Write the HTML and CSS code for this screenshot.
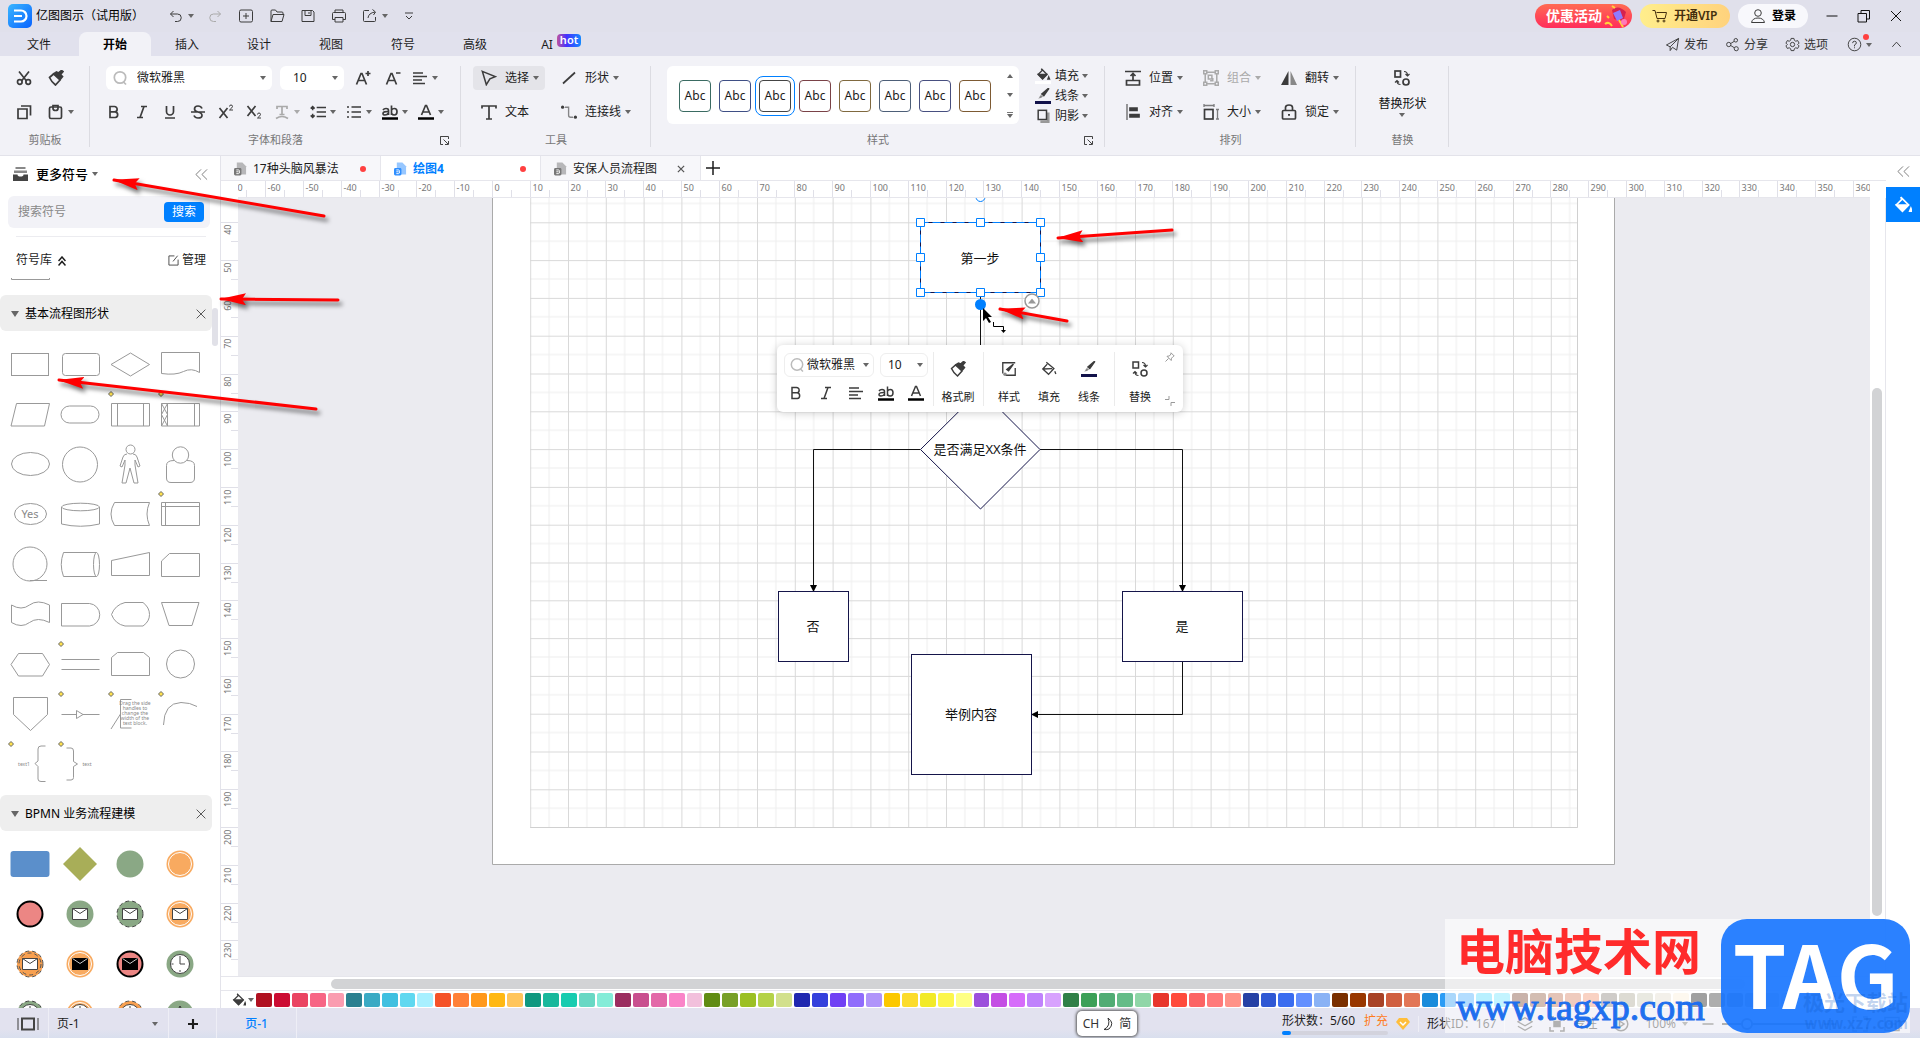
FILE: index.html
```html
<!DOCTYPE html>
<html lang="zh-CN">
<head>
<meta charset="utf-8">
<meta name="viewport" content="width=device-width, initial-scale=1">
<title>亿图图示（试用版）</title>
<link rel="stylesheet" href="styles.css">
</head>
<body>
<svg class="defs" aria-hidden="true">
  <defs>
    <symbol id="caret" viewBox="0 0 6 4"><path d="M0 0h6L3 4z" fill="currentColor" stroke="none"/></symbol>
    <symbol id="caret-up" viewBox="0 0 6 4"><path d="M0 4h6L3 0z" fill="currentColor" stroke="none"/></symbol>
    <symbol id="undo" viewBox="0 0 16 16"><path d="M5.5 3 2.5 6l3 3M2.5 6h7a3.6 3.6 0 0 1 0 7.500H7"/></symbol>
    <symbol id="redo" viewBox="0 0 16 16"><path d="m10.500 3 3 3-3 3M13.500 6h-7a3.600 3.600 0 0 0 0 7.500H9"/></symbol>
    <symbol id="new" viewBox="0 0 16 16"><rect x="1.500" y="2" width="13" height="12" rx="1.500"/><path d="M8 5v6M5 8h6"/></symbol>
    <symbol id="open" viewBox="0 0 16 16"><path d="M2 13.500V3q0-1 1-1h3.500l1.500 2h5q1 0 1 1v1.500M2 13.500 4 6.500h11l-2 7z"/></symbol>
    <symbol id="save" viewBox="0 0 16 16"><path d="M2 2.500h10.500L14 4v9.500H2zM5 2.500v5h6v-5M9 4v2"/></symbol>
    <symbol id="print" viewBox="0 0 16 16"><path d="M4 5V2h8v3M4 11.500H1.500V5.500q0-1 1-1h11q1 0 1 1v6H12M4 9.500h8v4.500H4z"/></symbol>
    <symbol id="export" viewBox="0 0 16 16"><path d="M7 2.500H2.500q-1 0-1 1v9q0 1 1 1h10q1 0 1-1V9M6 10q.5-5 7-6M10.500 1.500l3 2.500-2 3"/></symbol>
    <symbol id="more" viewBox="0 0 16 16"><path d="M4 5h8M5 8l3 3 3-3"/></symbol>
    <symbol id="cart" viewBox="0 0 16 16"><path d="M.5 2.500H3l2 8h8l1.500-6H4.500"/><circle cx="6" cy="13" r="1"/><circle cx="12" cy="13" r="1"/></symbol>
    <symbol id="user" viewBox="0 0 16 16"><circle cx="8" cy="5" r="3.300"/><path d="M1.500 14.500q1-4.500 6.500-4.500t6.500 4.500z"/></symbol>
    <symbol id="min" viewBox="0 0 16 16"><path d="M2.500 8h11"/></symbol>
    <symbol id="restore" viewBox="0 0 16 16"><path d="M2 5.500h8.500V14H2zM5 5.500V2.500h8.500V11h-3"/></symbol>
    <symbol id="close" viewBox="0 0 16 16"><path d="m3 3 10 10M13 3 3 13"/></symbol>
    <symbol id="send" viewBox="0 0 16 16"><path d="M14.500 1.500 1.500 8.500l4 2 9-9L12.500 14 8 11M5.500 10.500v4L8 11"/></symbol>
    <symbol id="share" viewBox="0 0 16 16"><circle cx="4" cy="8" r="2.300"/><circle cx="11.500" cy="3.500" r="1.900"/><circle cx="12" cy="12.500" r="2.200"/><path d="m6 7 4-2.500M6 9l4 2.500"/></symbol>
    <symbol id="gear" viewBox="0 0 16 16"><circle cx="8" cy="8" r="2.300"/><path d="M6.500 1.500h3l.5 2 1.500 1 2-.7 1.500 2.700L13.500 8l1.500 1.500-1.500 2.700-2-.7-1.500 1-.5 2h-3l-.5-2-1.500-1-2 .7L1 9.500 2.500 8 1 6.500l1.500-2.700 2 .7 1.500-1z"/></symbol>
    <symbol id="help" viewBox="0 0 16 16"><circle cx="8" cy="8" r="6.700"/><path d="M6 6.500q0-2 2-2t2 1.800Q10 7.500 8 8.500V10M8 11v1"/></symbol>
    <symbol id="chev-up" viewBox="0 0 16 16"><path d="m3.500 10.500 4.500-5 4.500 5"/></symbol>
    <symbol id="cut" viewBox="0 0 16 16"><path d="M3 1.500 10.500 11M13 1.500 5.500 11"/><circle cx="3.800" cy="12" r="2.300"/><circle cx="12.200" cy="12" r="2.300"/></symbol>
    <symbol id="brush" viewBox="0 0 16 16"><path d="m1.500 7.500 4-3.500L12 10l-4.500 5Q3.500 12 1.500 7.500z"/><path d="M6 3.500 12.500 9l2-2.500-2-2L15 1.500 13.500.500l-3 2.500L8.500 2z" fill="currentColor"/></symbol>
    <symbol id="copy" viewBox="0 0 16 16"><path d="M2 5h9v9.500H2zM5 2h9.500v9.500"/></symbol>
    <symbol id="paste" viewBox="0 0 16 16"><rect x="1.500" y="3" width="12" height="11.500" rx="1.500"/><path d="M5 1.500h5v3q0 2-2.500 2T5 4.500z"/></symbol>
    <symbol id="search" viewBox="0 0 16 16"><circle cx="8" cy="7.500" r="5.700"/><path d="m11.500 12 2.500 2.500"/></symbol>
    <symbol id="grow" viewBox="0 0 16 16"><path d="M1.500 14.500 6 3.500h1l4.500 11M3.500 10.500h6M13 1v5M10.500 3.500h5"/></symbol>
    <symbol id="shrink" viewBox="0 0 16 16"><path d="M1.500 14.500 6 3.500h1l4.500 11M3.500 10.500h6M11 3h4.500"/></symbol>
    <symbol id="align" viewBox="0 0 16 16"><path d="M1 3h10M1 6.500h14M1 10h9M1 13.500h12"/></symbol>
    <symbol id="bold" viewBox="0 0 16 16"><path d="M4 2.500h4.500a2.600 2.600 0 0 1 0 5.300H4zM4 7.800h5.300a2.900 2.900 0 0 1 0 5.700H4z"/></symbol>
    <symbol id="italic" viewBox="0 0 16 16"><path d="M7 2.500h6M3 13.500h6M10 2.500 6 13.500"/></symbol>
    <symbol id="underline" viewBox="0 0 16 16"><path d="M4.500 2v5.500a3.500 3.500 0 0 0 7 0V2M3 14h10"/></symbol>
    <symbol id="strike" viewBox="0 0 16 16"><path d="M12 4.500Q11 2 8 2 4.500 2 4.500 5q0 2 3.500 3 4 1 4 3.500 0 2.500-4 2.500-3 0-4-2.500M1 8h14"/></symbol>
    <symbol id="sup" viewBox="0 0 16 16"><path d="m1.500 4 8 10M9.500 4l-8 10"/><path d="M11.500 2.500q0-1.500 1.500-1.500t1.500 1.500q0 1-3 3.500h3.500" stroke-width="1"/></symbol>
    <symbol id="sub" viewBox="0 0 16 16"><path d="m1.500 2 8 10M9.500 2l-8 10"/><path d="M11.500 10.500q0-1.500 1.500-1.500t1.500 1.500q0 1-3 3.500h3.500" stroke-width="1"/></symbol>
    <symbol id="texteff" viewBox="0 0 16 16"><path d="M3 5V2.500h10V5M8 2.500v8M5.500 10.500h5M2 14.500q6-4 12 0"/></symbol>
    <symbol id="spacing" viewBox="0 0 18 16"><path d="M7.500 3H18M7.500 8H18M7.500 13H18M3 2v4M3 10v4M.8 4.200 3 2l2.200 2.200M.8 11.800 3 14l2.200-2.200"/></symbol>
    <symbol id="list" viewBox="0 0 16 16"><path d="M1 3h2M1 8h2M1 13h2M5.500 3H15M5.500 8H15M5.500 13H15"/></symbol>
    <symbol id="ab" viewBox="0 0 16 16"><path d="M1 6q1-1.500 3-1.500 2.500 0 2.500 2V11M6.500 7.500Q1 7.300 1 9.500 1 11 3 11q2.500 0 3.500-2M9.500 1.500V11M9.500 6q1-1.500 2.800-1.500 2.700 0 2.700 3.200T12.300 11Q10.500 11 9.500 9.500"/><path d="M0 14.500h16" stroke="#000" stroke-width="2.500"/></symbol>
    <symbol id="fcolor" viewBox="0 0 16 16"><path d="M3.500 11 7.500 1.500h1l4 9.500M5 8h6"/><path d="M0 14.500h16" stroke="#000" stroke-width="2.500"/></symbol>
    <symbol id="pointer" viewBox="0 0 18 18"><path d="m1.500 1.500 14.500 6-6 2.500-4 6.500z"/></symbol>
    <symbol id="line" viewBox="0 0 16 16"><path d="M2 13.500 14 2.500"/></symbol>
    <symbol id="text" viewBox="0 0 16 16"><path d="M1 4.500V2h14v2.500M8 2v13M5 15h6"/></symbol>
    <symbol id="connector" viewBox="0 0 20 18"><circle cx="2" cy="3" r="2" fill="currentColor" stroke="none"/><circle cx="18" cy="15.500" r="2" fill="currentColor" stroke="none"/><path d="M5 3h4.500v10q0 2.500 2.500 2.500h3" opacity=".6"/></symbol>
    <symbol id="bucket" viewBox="0 0 16 16"><path d="m6 1 7 7-5.500 5.500L2 8l5-5z"/><path d="M2.500 8H12l-4.500 5zM15 11l1 2.500h-2z" fill="currentColor"/></symbol>
    <symbol id="bucket-line" viewBox="0 0 18 18"><path d="m6 1.500 8.500 7-6 6.500L2 9l5-5.500M2.500 9l10-.500M15.500 11.500l1.200 3"/></symbol>
    <symbol id="pen" viewBox="0 0 16 16"><path d="M14.500.500 15 1 9 9.500 6.500 7.500z" fill="currentColor"/><path d="M5.500 8.500 8 10.500Q6 13 2 13q2-1.500 2-3z" fill="#888" stroke="none"/></symbol>
    <symbol id="shadow" viewBox="0 0 16 16"><path d="M14 4v10.500H5" stroke="#999" stroke-width="3"/><rect x="2.500" y="1.500" width="9.500" height="10.500"/></symbol>
    <symbol id="launcher" viewBox="0 0 9 9"><path d="M3 .5H.5v8H3M8.500 3V.5H.5M3.500 3.500 8 8M8.500 5v3.500H5"/></symbol>
    <symbol id="position" viewBox="0 0 16 16"><path d="M0 1.500h16M8 10V4M5.500 6 8 3.500 10.500 6M1.500 10.500h13v4.500h-13z"/></symbol>
    <symbol id="alignobj" viewBox="0 0 16 16"><path d="M2 0v16" opacity=".6"/><path d="M5 4h7v2.500H5zM5 10.500h9V13H5z" fill="currentColor"/></symbol>
    <symbol id="group" viewBox="0 0 18 18"><path d="M2.500 2.500h13v13h-13z"/><path d="M.8.800h3.400v3.400H.8zM13.800.800h3.400v3.400h-3.400zM.8 13.800h3.400v3.400H.8zM13.800 13.800h3.400v3.400h-3.400z" fill="#f2f2f7"/><path d="M6 6h4v4H6zM11 9v3H8"/></symbol>
    <symbol id="size" viewBox="0 0 16 16"><rect x="1.500" y="5.500" width="8.500" height="9.500"/><path d="M.5 1.500h11M1 0v3M11 0v3M13 5.500h3M13 15h3M14.500 5.500V15" opacity=".65" stroke-width="1.300"/></symbol>
    <symbol id="flip" viewBox="0 0 16 16"><path d="M7.500 1v14H0z" fill="currentColor" stroke="none"/><path d="M9.500 1v14H16z" fill="#888" stroke="none"/></symbol>
    <symbol id="lock" viewBox="0 0 16 16"><rect x="1.500" y="6.500" width="13" height="8.500" rx="1"/><path d="M4.500 6.500V3.500q0-2.500 3.500-2.500t3.500 2.500v3M7 10.800h2"/></symbol>
    <symbol id="replace" viewBox="0 0 16 16"><rect x="1" y="1" width="5.500" height="6"/><circle cx="12" cy="12" r="3"/><path d="M10 1.500q3.500 0 3.500 4M11.500 4l2 2 2-2M6.500 14.500Q3 14.500 3 11M1 12.500l2-2 2 2" stroke-width="1.200"/></symbol>
    <symbol id="drawer" viewBox="0 0 15 15"><path d="M2.500 0h10v2h-10zM1 3.500h13V6H1z" fill="#888" stroke="none"/><path d="M0 7.500h4.500q0 2 3 2t3-2H15V14H0z" fill="currentColor" stroke="none"/></symbol>
    <symbol id="dbl-left" viewBox="0 0 14 14"><path d="M6.500 1.500 1 7l5.500 5.500M13 1.500 7.500 7l5.500 5.500"/></symbol>
    <symbol id="dbl-up" viewBox="0 0 8 10"><path d="m.5 5 3.500-4 3.500 4M.5 9.500 4 5.500l3.500 4"/></symbol>
    <symbol id="edit" viewBox="0 0 12 12"><path d="M7 1H1v10h10V5M5.500 7 10.500.800"/></symbol>
    <symbol id="file" viewBox="0 0 14 14"><path d="M3 0h6l4 4v9H3z" fill="currentColor" opacity=".5" stroke="none"/><rect x="0" y="6" width="8" height="8" rx="1.500" fill="currentColor" stroke="none"/><path d="M2.500 8h2.300q1.200 0 1.200 2t-1.200 2H2.500M2.500 10H5" stroke="#fff" stroke-width="1"/></symbol>
    <symbol id="plus" viewBox="0 0 14 14"><path d="M7 0v14M0 7h14"/></symbol>
    <symbol id="pages" viewBox="0 0 22 14"><rect x="5" y="1.500" width="12" height="11"/><path d="M1 1v12M21 1v12" stroke-width="1.500" opacity=".7"/></symbol>
    <symbol id="layers" viewBox="0 0 18 16"><path d="m1 5.500 8-4.500 8 4.500-8 4.500zM1 10.500l8 4.500 8-4.500"/></symbol>
    <symbol id="focus" viewBox="0 0 16 16"><path d="M1 5V1h4M11 1h4v4M15 11v4h-4M5 15H1v-4"/><path d="M5 5.500h6v5H5z" fill="currentColor"/></symbol>
    <symbol id="play" viewBox="0 0 16 16"><circle cx="8" cy="8" r="6.800"/><path d="m6.500 5 4.500 3-4.500 3z"/></symbol>
    <symbol id="fit" viewBox="0 0 16 16"><path d="M1 5V1h4M11 1h4v4M15 11v4h-4M5 15H1v-4"/></symbol>
    <symbol id="full" viewBox="0 0 16 16"><rect x="1" y="1.500" width="14" height="13"/><path d="M4 8h3M9 8h3M8 4v8"/></symbol>
    <symbol id="pin" viewBox="0 0 10 10"><path d="m6 .8 3.200 3.200-1 .5-1.700 1.700-.3 2.300L2 4.300 4.300 4 6 2zM3.500 6.500.500 9.500"/></symbol>
    <symbol id="style" viewBox="0 0 18 18"><path d="M16 2H2v12M5 16h11V8"/><path d="M14 3.500 8.500 11l-2-1.500z" fill="currentColor"/><circle cx="4.500" cy="15" r="2" fill="#888" stroke="none"/></symbol>
    <symbol id="brace" viewBox="0 0 50 50"><path d="M40.500 7H36q-3 0-3 3v12l-3 2.500 3 3V40q0 2.500 3 2.500h4.500"/></symbol>
    <symbol id="mail" viewBox="0 0 50 50"><path d="M17.500 19.500h15v11h-15z" fill="#fff" stroke="#444"/><path d="m17.500 19.500 7.500 5 7.500-5" stroke="#444"/></symbol>
    <symbol id="mail-dark" viewBox="0 0 50 50"><path d="M17 19h16v12H17z" fill="#000" stroke="none"/><path d="m17.500 19.500 7.500 5 7.500-5" stroke="#ccc"/></symbol>
    <symbol id="clock" viewBox="0 0 50 50"><circle cx="25" cy="25" r="9.500" fill="#fff" stroke="#444"/><path d="M25 17v8h5M25 33v-2M16.500 25h2" stroke="#444"/></symbol>
    <symbol id="handle" viewBox="0 0 50 50"><path d="M6 2.500 8.500 5 6 7.500 3.500 5z" fill="#ffe14d" stroke="#666"/></symbol>
    <marker id="red-head" viewBox="0 0 26 12" refX="25" refY="6" markerWidth="26" markerHeight="12" markerUnits="userSpaceOnUse" orient="auto"><path d="M26 6 0 0l4 6-4 6z" fill="#f00" stroke="none"/></marker>
    <marker id="flow-head" viewBox="0 0 7 7" refX="6" refY="3.500" markerWidth="7" markerHeight="7" markerUnits="userSpaceOnUse" orient="auto"><path d="M7 3.500 0 0v7z" fill="#000" stroke="none"/></marker>
    <linearGradient id="logo-fill" x1="0" y1="0" x2="1" y2="1"><stop offset="0" stop-color="#39b6ff"/><stop offset="1" stop-color="#0a63ff"/></linearGradient>
  </defs>
</svg>

<header class="titlebar">
  <svg class="logo" viewBox="0 0 24 24"><rect width="24" height="24" rx="5" fill="url(#logo-fill)"/><path d="M6 6.500h7a5.500 5.500 0 0 1 0 11H6M6 12h8" stroke="#fff" stroke-width="2.200" fill="none"/></svg>
  <h1 class="app-name">亿图图示（试用版）</h1>
  <nav class="quick">
    <button aria-label="撤销"><svg class="i"><use href="#undo"/></svg><svg class="c"><use href="#caret"/></svg></button>
    <button class="off" aria-label="恢复"><svg class="i"><use href="#redo"/></svg></button>
    <button aria-label="新建"><svg class="i"><use href="#new"/></svg></button>
    <button aria-label="打开"><svg class="i"><use href="#open"/></svg></button>
    <button aria-label="保存"><svg class="i"><use href="#save"/></svg></button>
    <button aria-label="打印"><svg class="i"><use href="#print"/></svg></button>
    <button aria-label="导出"><svg class="i"><use href="#export"/></svg><svg class="c"><use href="#caret"/></svg></button>
    <button aria-label="更多"><svg class="i"><use href="#more"/></svg></button>
  </nav>
  <div class="account">
    <button class="pill promo">优惠活动<svg viewBox="0 0 26 24"><path d="M8 6Q14 0 22 8l-3 10-9-3z" fill="#d6224f"/><path d="m9 9 7-3 3 8-6 3z" fill="#8f7bff"/><path d="M1 20q4-3 7 2M15 16l4 7M3 12l2 2M8 2l3 2" stroke="#ffd23a" stroke-width="2" fill="none"/><circle cx="20" cy="18" r="3" fill="#ff7ab8"/></svg></button>
    <button class="pill vip"><svg class="i"><use href="#cart"/></svg>开通VIP</button>
    <button class="pill login"><svg class="i"><use href="#user"/></svg>登录</button>
  </div>
  <div class="winbtns">
    <button aria-label="最小化"><svg class="i"><use href="#min"/></svg></button>
    <button aria-label="还原"><svg class="i"><use href="#restore"/></svg></button>
    <button aria-label="关闭"><svg class="i"><use href="#close"/></svg></button>
  </div>
</header>

<div class="menubar">
  <nav class="menus">
    <button class="file">文件</button><button class="on">开始</button><button>插入</button><button>设计</button><button>视图</button><button>符号</button><button>高级</button><button class="ai">AI<span class="hot">hot</span></button>
  </nav>
  <div class="actions">
    <button><svg class="i"><use href="#send"/></svg>发布</button>
    <button><svg class="i"><use href="#share"/></svg>分享</button>
    <button><svg class="i"><use href="#gear"/></svg>选项</button>
    <button class="help" aria-label="帮助"><svg class="i"><use href="#help"/></svg><svg class="c"><use href="#caret"/></svg></button>
    <button aria-label="收起"><svg class="i"><use href="#chev-up"/></svg></button>
  </div>
</div>

<section class="ribbon">
  <div class="group g-clip">
    <div class="row wide"><button aria-label="剪切"><svg class="i"><use href="#cut"/></svg></button><button aria-label="格式刷"><svg class="i"><use href="#brush"/></svg></button></div>
    <div class="row wide"><button aria-label="复制"><svg class="i"><use href="#copy"/></svg></button><button aria-label="粘贴"><svg class="i"><use href="#paste"/></svg><svg class="c"><use href="#caret"/></svg></button></div>
    <div class="label"><span>剪贴板</span></div>
  </div>
  <div class="group g-font">
    <div class="row">
      <label class="combo font"><svg class="i"><use href="#search"/></svg><select aria-label="字体"><option>微软雅黑</option></select><svg class="c"><use href="#caret"/></svg></label>
      <label class="combo size"><select aria-label="字号"><option>10</option></select><svg class="c"><use href="#caret"/></svg></label>
      <button class="sq" aria-label="增大字号"><svg class="i"><use href="#grow"/></svg></button>
      <button class="sq" aria-label="减小字号"><svg class="i"><use href="#shrink"/></svg></button>
      <button aria-label="对齐"><svg class="i"><use href="#align"/></svg><svg class="c"><use href="#caret"/></svg></button>
    </div>
    <div class="row marks">
      <div class="set plain"><button aria-label="加粗"><svg class="i"><use href="#bold"/></svg></button><button aria-label="斜体"><svg class="i"><use href="#italic"/></svg></button><button aria-label="下划线"><svg class="i"><use href="#underline"/></svg></button><button aria-label="删除线"><svg class="i"><use href="#strike"/></svg></button><button aria-label="上标"><svg class="i"><use href="#sup"/></svg></button><button aria-label="下标"><svg class="i"><use href="#sub"/></svg></button></div>
      <div class="set"><button class="off" aria-label="文字效果"><svg class="i"><use href="#texteff"/></svg><svg class="c"><use href="#caret"/></svg></button><button aria-label="行距"><svg class="i"><use href="#spacing"/></svg><svg class="c"><use href="#caret"/></svg></button><button aria-label="列表"><svg class="i"><use href="#list"/></svg><svg class="c"><use href="#caret"/></svg></button><button aria-label="突出显示"><svg class="i"><use href="#ab"/></svg><svg class="c"><use href="#caret"/></svg></button><button aria-label="字体颜色"><svg class="i"><use href="#fcolor"/></svg><svg class="c"><use href="#caret"/></svg></button></div>
    </div>
    <div class="label"><span>字体和段落</span><button aria-label="字体设置"><svg class="launch"><use href="#launcher"/></svg></button></div>
  </div>
  <div class="group g-tools">
    <div class="row"><button class="tool active"><svg class="i"><use href="#pointer"/></svg>选择<svg class="c"><use href="#caret"/></svg></button><button class="tool"><svg class="i"><use href="#line"/></svg>形状<svg class="c"><use href="#caret"/></svg></button></div>
    <div class="row"><button class="tool"><svg class="i"><use href="#text"/></svg>文本</button><button class="tool"><svg class="i"><use href="#connector"/></svg>连接线<svg class="c"><use href="#caret"/></svg></button></div>
    <div class="label"><span>工具</span></div>
  </div>
  <div class="group g-style">
    <div class="style-row">
      <div class="gallery">
        <button class="s1">Abc</button><button class="s2">Abc</button><button class="s3 chosen">Abc</button><button class="s4">Abc</button><button class="s5">Abc</button><button class="s6">Abc</button><button class="s7">Abc</button><button class="s8">Abc</button>
        <div class="arrows"><button aria-label="上一行"><svg class="c"><use href="#caret-up"/></svg></button><button aria-label="下一行"><svg class="c"><use href="#caret"/></svg></button><button class="last" aria-label="全部样式"><svg class="c"><use href="#caret"/></svg></button></div>
      </div>
      <div class="stack">
        <button><svg class="i white-bar"><use href="#bucket"/></svg>填充<svg class="c"><use href="#caret"/></svg></button>
        <button><svg class="i navy-bar"><use href="#pen"/></svg>线条<svg class="c"><use href="#caret"/></svg></button>
        <button><svg class="i small"><use href="#shadow"/></svg>阴影<svg class="c"><use href="#caret"/></svg></button>
      </div>
    </div>
    <div class="label"><span>样式</span><button aria-label="样式设置"><svg class="launch"><use href="#launcher"/></svg></button></div>
  </div>
  <div class="group g-arrange">
    <div class="row"><button class="tool"><svg class="i"><use href="#position"/></svg>位置<svg class="c"><use href="#caret"/></svg></button><button class="tool off"><svg class="i"><use href="#group"/></svg>组合<svg class="c"><use href="#caret"/></svg></button><button class="tool"><svg class="i"><use href="#flip"/></svg>翻转<svg class="c"><use href="#caret"/></svg></button></div>
    <div class="row"><button class="tool"><svg class="i"><use href="#alignobj"/></svg>对齐<svg class="c"><use href="#caret"/></svg></button><button class="tool"><svg class="i"><use href="#size"/></svg>大小<svg class="c"><use href="#caret"/></svg></button><button class="tool"><svg class="i"><use href="#lock"/></svg>锁定<svg class="c"><use href="#caret"/></svg></button></div>
    <div class="label"><span>排列</span></div>
  </div>
  <div class="group g-replace">
    <button class="big"><svg class="i"><use href="#replace"/></svg><span>替换形状</span><svg class="c"><use href="#caret"/></svg></button>
    <div class="label"><span>替换</span></div>
  </div>
</section>

<main class="work">
  <aside class="panel">
    <div class="panel-head"><svg class="drawer"><use href="#drawer"/></svg><button class="more-sym">更多符号<svg class="c"><use href="#caret"/></svg></button><button class="collapse" aria-label="收起面板"><svg><use href="#dbl-left"/></svg></button></div>
    <form class="search"><input type="text" aria-label="搜索符号" placeholder="搜索符号"><button type="button">搜索</button></form>
    <div class="lib"><span>符号库</span><svg class="up2"><use href="#dbl-up"/></svg><button><svg><use href="#edit"/></svg>管理</button></div>
    <div class="sym-scroll">
      <svg class="peek" viewBox="0 0 50 12"><path d="M6.500 1v1.500h38V1"/></svg>
      <div class="sec"><svg class="tri" viewBox="0 0 8 6"><path d="M0 0h8L4 6z"/></svg><h2>基本流程图形状</h2><button aria-label="关闭"><svg><use href="#close"/></svg></button></div>
      <div class="shapes">
        <svg viewBox="0 0 50 50"><rect x="6.500" y="14.500" width="37" height="22"/></svg>
        <svg viewBox="0 0 50 50"><rect x="7.500" y="14.500" width="37" height="22" rx="3"/></svg>
        <svg viewBox="0 0 50 50"><path d="M6 25.500 25.500 14l19 11.500L25.500 37z"/></svg>
        <svg viewBox="0 0 50 50"><path d="M6.500 13.500h38v20q-8-5-16-1t-22 2z"/></svg>
        <svg viewBox="0 0 50 50"><path d="M11.500 14.500h33l-5 22.500H6z"/></svg>
        <svg viewBox="0 0 50 50"><rect x="6" y="17" width="38" height="17" rx="8.500"/></svg>
        <svg viewBox="0 0 50 50"><use href="#handle"/><path d="M6.500 14.500h38v22.500h-38zM12.500 14.500V37M38.500 14.500V37"/></svg>
        <svg viewBox="0 0 50 50"><use href="#handle"/><path d="M6.500 14.500h38v22.500h-38zM12.500 14.500V37M39.500 14.500V37M6.500 14.500l6 11-6 11.500M12.500 14.500l-6 11 6 11.500"/></svg>
        <svg viewBox="0 0 50 50"><ellipse cx="25.500" cy="25" rx="19" ry="11.500"/></svg>
        <svg viewBox="0 0 50 50"><circle cx="25" cy="25.500" r="17.500"/></svg>
        <svg viewBox="0 0 50 50"><circle cx="25.500" cy="10.500" r="4.500"/><path d="M22 15q-3 0-4 3l-3 9 2 1 3-7v5l-3 18h4l4-15 4 15h4l-3-18v-5l3 7 2-1-3-9q-1-3-4-3"/></svg>
        <svg viewBox="0 0 50 50"><circle cx="25.500" cy="16" r="8.200"/><path d="M19 21.500q-7.500 0-7.500 5V39q0 4.500 4.500 4.500h19q4.500 0 4.500-4.500V26.500q0-5-7.500-5"/></svg>
        <svg viewBox="0 0 50 50"><ellipse cx="25.500" cy="25" rx="16" ry="10.500"/><text x="25" y="29" class="yes">Yes</text></svg>
        <svg viewBox="0 0 50 50"><ellipse cx="25.500" cy="18" rx="19" ry="3.800"/><path d="M6.500 18v17q19 4.500 38 0V18"/></svg>
        <svg viewBox="0 0 50 50"><path d="M9.500 13.500h35q-5 11.500 0 23h-35q-7-11.500 0-23z"/></svg>
        <svg viewBox="0 0 50 50"><use href="#handle"/><path d="M6.500 13.500h38v23h-38zM6.500 17.500h38M10.500 13.500v23"/></svg>
        <svg viewBox="0 0 50 50"><circle cx="25" cy="25" r="17"/><path d="M25 41.500h17"/></svg>
        <svg viewBox="0 0 50 50"><ellipse cx="41.500" cy="25.500" rx="3" ry="12"/><path d="M41.500 13.500h-33q-4.500 12 0 24h33"/></svg>
        <svg viewBox="0 0 50 50"><path d="M6.500 21.500 44.500 13.500v23h-38z"/></svg>
        <svg viewBox="0 0 50 50"><path d="m6.500 22 8-7.500h30v23h-38z"/></svg>
        <svg viewBox="0 0 50 50"><path d="M6.500 16q10 6 18 0t20 0v17.500q-12-6-20 0t-18 0z"/></svg>
        <svg viewBox="0 0 50 50"><path d="M6.500 14.500h28a11.300 11.300 0 0 1 0 22.500h-28z"/></svg>
        <svg viewBox="0 0 50 50"><path d="M20 13.500h18q6.500 5 6.500 12T38 37H20Q10 35 6.500 25.500 10 16 20 13.500z"/></svg>
        <svg viewBox="0 0 50 50"><path d="M6.500 13.500h37.500L37 36.500H14z"/></svg>
        <svg viewBox="0 0 50 50"><path d="M6 25.500 13.500 14.500h24l7 11-7 11.500h-24z"/></svg>
        <svg viewBox="0 0 50 50"><use href="#handle"/><path d="M6.500 20.500h38M6.500 30.500h38"/></svg>
        <svg viewBox="0 0 50 50"><path d="m6.500 18.500 6-5h26l6 5v18h-38z"/></svg>
        <svg viewBox="0 0 50 50"><circle cx="25.500" cy="25" r="14"/></svg>
        <svg viewBox="0 0 50 50"><path d="M8.500 8.500h34v17l-17 16-17-16z"/></svg>
        <svg viewBox="0 0 50 50"><use href="#handle"/><path d="M6.500 25.500h15M28 25.500h16.500M21.500 21.500v8l6.500-4z"/></svg>
        <svg viewBox="0 0 50 50"><use href="#handle"/><path d="M26.500 10.500H15.500v28.500h11M15.500 25 6 40"/><g class="tiny"><text x="30" y="16">Drag the side</text><text x="30" y="21">handles to</text><text x="30" y="26">change the</text><text x="30" y="31">width of the</text><text x="30" y="36">text block.</text></g></svg>
        <svg viewBox="0 0 50 50"><use href="#handle"/><path d="M8.500 36Q9 14 26 13.500q9 0 16 4"/></svg>
        <svg viewBox="0 0 50 50"><use href="#handle"/><use href="#brace"/><g class="tiny"><text x="19" y="27">text1</text></g></svg>
        <svg viewBox="0 0 50 50"><use href="#handle"/><path d="M11.500 9H16q2.500 0 2.500 3v10.500l4 2.500-4 2.500V38.500q0 2.500-2.500 2.500h-4.500"/><g class="tiny"><text x="32" y="27">text</text></g></svg>
      </div>
      <div class="sec second"><svg class="tri" viewBox="0 0 8 6"><path d="M0 0h8L4 6z"/></svg><h2>BPMN 业务流程建模</h2><button aria-label="关闭"><svg><use href="#close"/></svg></button></div>
      <div class="shapes bpmn">
        <svg viewBox="0 0 50 50"><rect x="5.500" y="12" width="39" height="26" rx="3" fill="#5b8fcb"/></svg>
        <svg viewBox="0 0 50 50"><path d="M25 8 42 25 25 42 8 25z" fill="#a8ae58"/></svg>
        <svg viewBox="0 0 50 50"><circle cx="25" cy="25" r="13.500" fill="#8aa885"/></svg>
        <svg viewBox="0 0 50 50"><circle cx="25" cy="25" r="13.500" fill="#f8aa60"/><circle cx="25" cy="25" r="11.500" stroke="#fff"/></svg>
        <svg viewBox="0 0 50 50"><circle cx="25" cy="25" r="12.500" fill="#ec8684" stroke="#000" stroke-width="2"/></svg>
        <svg viewBox="0 0 50 50"><circle cx="25" cy="25" r="13.500" fill="#8aa885"/><use href="#mail"/></svg>
        <svg viewBox="0 0 50 50"><circle cx="25" cy="25" r="13" fill="#8aa885" stroke="#444" stroke-dasharray="4 3"/><use href="#mail"/></svg>
        <svg viewBox="0 0 50 50"><circle cx="25" cy="25" r="13.500" fill="#f8aa60"/><circle cx="25" cy="25" r="11.500" stroke="#fff"/><use href="#mail"/></svg>
        <svg viewBox="0 0 50 50"><circle cx="25" cy="25" r="13" fill="#f8a050" stroke="#555" stroke-dasharray="4 3"/><circle cx="25" cy="25" r="11" stroke="#555" stroke-dasharray="4 3"/><use href="#mail"/></svg>
        <svg viewBox="0 0 50 50"><circle cx="25" cy="25" r="13.500" fill="#f8aa60"/><circle cx="25" cy="25" r="11.500" stroke="#fff"/><use href="#mail-dark"/></svg>
        <svg viewBox="0 0 50 50"><circle cx="25" cy="25" r="12.500" fill="#ec8684" stroke="#000" stroke-width="2"/><use href="#mail-dark"/></svg>
        <svg viewBox="0 0 50 50"><circle cx="25" cy="25" r="13.500" fill="#8aa885"/><use href="#clock"/></svg>
        <svg viewBox="0 0 50 50"><circle cx="25" cy="25" r="13" fill="#8aa885" stroke="#444" stroke-dasharray="4 3"/><use href="#clock"/></svg>
        <svg viewBox="0 0 50 50"><circle cx="25" cy="25" r="13.500" fill="#f8aa60"/><circle cx="25" cy="25" r="11.500" stroke="#fff"/><use href="#clock"/></svg>
        <svg viewBox="0 0 50 50"><circle cx="25" cy="25" r="13" fill="#f8a050" stroke="#555" stroke-dasharray="4 3"/><use href="#clock"/></svg>
        <svg viewBox="0 0 50 50"><circle cx="25" cy="25" r="13.500" fill="#8aa885"/><path d="m25 17 6 12H19z" stroke="#333"/></svg>
      </div>
      <span class="thumb"></span>
    </div>
  </aside>

  <section class="center">
    <nav class="docs">
      <button class="doc"><svg><use href="#file"/></svg>17种头脑风暴法<i class="dot"></i></button>
      <button class="doc on"><svg><use href="#file"/></svg>绘图4<i class="dot"></i></button>
      <button class="doc"><svg><use href="#file"/></svg>安保人员流程图<svg class="x"><use href="#close"/></svg></button>
      <button class="add" aria-label="新建标签"><svg><use href="#plus"/></svg></button>
    </nav>
    <div class="stage">
      <span class="corner"></span>
      <svg class="ruler h" id="ruler-h"></svg>
      <span class="vtop"></span>
      <svg class="ruler v" id="ruler-v"></svg>
      <div class="canvas">
        <svg class="drawing">
          <defs>
            <pattern id="mm" width="37.800" height="37.800" patternUnits="userSpaceOnUse" x="530.200" y="222.300"><path d="M18.900 0v37.800M0 18.900h37.800" stroke="#eeeeee"/><path d="M.500 0v37.800M0 .500h37.800" stroke="#d9d9d9"/></pattern>
          </defs>
          <g transform="translate(-238 -198)">
            <path d="M492.500 190V864.500H1614.500V190z" fill="#fff" stroke="#aaa"/>
            <path d="M530 190H1577.500V828H530z" fill="url(#mm)"/>
            <path d="M1577.500 190V827.500H530.500" class="edge"/>
            <g class="links">
              <path d="M980.500 293v97"/>
              <path d="M920 449.500H813.500V591"/>
              <path d="M1040 449.500H1182.500V591"/>
              <path d="M1182.500 661V714.500H1032"/>
            </g>
            <g class="nodes">
              <path d="M980.500 390 1040 449.500 980.500 509 920.500 449.500z"/>
              <rect x="778.500" y="591.500" width="70" height="70"/>
              <rect x="1122.500" y="591.500" width="120" height="70"/>
              <rect x="911.500" y="654.500" width="120" height="120"/>
              <rect x="920.500" y="222.500" width="120" height="70"/>
            </g>
            <rect x="920.500" y="222.500" width="120" height="70" class="sel"/>
            <g class="names">
              <text x="980" y="263">第一步</text><text x="980" y="454">是否满足XX条件</text><text x="813" y="631">否</text><text x="1182" y="631">是</text><text x="971" y="719">举例内容</text>
            </g>
            <g class="grips">
              <circle cx="980.500" cy="197" r="4.500"/>
              <path d="M916.500 218.500h8v8h-8zM976.500 218.500h8v8h-8zM1036.500 218.500h8v8h-8zM916.500 253.500h8v8h-8zM1036.500 253.500h8v8h-8zM916.500 288.500h8v8h-8zM976.500 288.500h8v8h-8zM1036.500 288.500h8v8h-8z"/>
            </g>
            <circle cx="980.500" cy="304.500" r="5.500" fill="#0080ff"/>
            <circle cx="1032" cy="301" r="7" fill="#fff" stroke="#999" stroke-width="1.500"/><path d="M1028 303.500h8l-4-5z" fill="#999"/>
            <path d="M983 308v13l3-3 3 5 2-1-3-5h4z" fill="#000"/>
            <path d="M993.500 322v4.500h10v4" fill="none" stroke="#000"/><path d="M1001 330h5l-2.500 3z" fill="#000"/>
          </g>
        </svg>
        <div class="floatbar">
          <div class="fb-text">
            <div class="fb-row"><label class="combo font"><svg class="i"><use href="#search"/></svg><select aria-label="浮动字体"><option>微软雅黑</option></select><svg class="c"><use href="#caret"/></svg></label><label class="combo size"><select aria-label="浮动字号"><option>10</option></select><svg class="c"><use href="#caret"/></svg></label></div>
            <div class="fb-row marks"><button aria-label="加粗"><svg class="i"><use href="#bold"/></svg></button><button aria-label="斜体"><svg class="i"><use href="#italic"/></svg></button><button aria-label="对齐"><svg class="i"><use href="#align"/></svg></button><button aria-label="突出显示"><svg class="i"><use href="#ab"/></svg></button><button aria-label="字体颜色"><svg class="i"><use href="#fcolor"/></svg></button></div>
          </div>
          <div class="fb-set"><button><svg class="i"><use href="#brush"/></svg>格式刷</button></div>
          <div class="fb-set"><button><svg class="i"><use href="#style"/></svg>样式</button><button><svg class="i"><use href="#bucket-line"/></svg>填充</button><button><svg class="i navy-bar"><use href="#pen"/></svg>线条</button></div>
          <div class="fb-set"><button><svg class="i"><use href="#replace"/></svg>替换</button></div>
          <div class="fb-end"><svg><use href="#pin"/></svg><svg viewBox="0 0 10 10"><path d="M4 0v3.500H0M6 10V6.500h4"/></svg></div>
        </div>
      </div>
      <div class="vbar"><span></span></div>
      <div class="hbar"><span></span></div>
    </div>
    <div class="palette"><button class="pick" aria-label="填充颜色"><svg class="i"><use href="#bucket"/></svg><svg class="c"><use href="#caret"/></svg></button><div class="swatches" id="swatches"></div></div>
  </section>

  <aside class="rail">
    <button class="collapse" aria-label="展开面板"><svg><use href="#dbl-left"/></svg></button>
    <button class="fill" aria-label="填充"><svg class="i"><use href="#bucket"/></svg></button>
  </aside>
</main>

<footer class="status">
  <button class="pg-view" aria-label="页面视图"><svg><use href="#pages"/></svg></button>
  <label class="pg-pick"><select aria-label="页面"><option>页-1</option></select><svg class="c"><use href="#caret"/></svg></label>
  <button class="pg-add" aria-label="添加页"><svg><use href="#plus"/></svg></button>
  <button class="pg-tab">页-1</button>
  <div class="info">
    <div class="count"><div><span>形状数：5/60</span><a href="#">扩充</a></div><progress max="60" value="5"></progress></div>
    <svg class="gem" viewBox="0 0 14 12"><path d="M3 0h8l3 4-7 8-7-8z" fill="#ffbe3b"/><path d="m4 4 3 3 3-3" stroke="#fff" stroke-width="1.500" fill="none"/></svg>
    <span class="sid">形状ID：167</span>
    <button aria-label="图层"><svg class="i"><use href="#layers"/></svg></button>
    <button class="foc"><svg class="i"><use href="#focus"/></svg>专注</button>
    <button aria-label="播放"><svg class="i"><use href="#play"/></svg></button>
    <button class="zoom">100%<svg class="c"><use href="#caret"/></svg></button>
    <div class="zoomer"><button aria-label="缩小"><svg class="i"><use href="#min"/></svg></button><input type="range" aria-label="缩放" min="0" max="100" value="24"><button aria-label="放大"><svg class="pl"><use href="#plus"/></svg></button></div>
    <button aria-label="适应页面"><svg class="i"><use href="#fit"/></svg></button>
    <button aria-label="全屏"><svg class="i"><use href="#full"/></svg></button>
  </div>
</footer>

<div class="ime">CH <svg viewBox="0 0 12 14"><path d="M5 1q7 5 1 11-2 1-5 .500Q8 9 5 1z"/></svg> 简</div>

<svg class="arrows-layer">
  <path d="M324 216 114 180"/><path d="M338 300 221 299"/><path d="M316 409 59 380"/><path d="M1172 230 1058 238"/><path d="M1067 321 1000 309"/>
</svg>

<div class="mark">
  <div class="mark-text"><p class="mark-cn">电脑技术网</p><p class="mark-url">www.tagxp.com</p></div>
  <div class="mark-tag">TAG</div>
  <div class="mark-dim"><p>极光下载站</p><p class="dim-url">www.xz7.com</p></div>
</div>
<script src="script.js"></script>
</body>
</html>
```
FILE: styles.css
```css
* { box-sizing: border-box; }
html, body { height: 100%; }
body {
  margin: 0; display: flex; flex-direction: column; overflow: hidden; position: relative;
  font: 12px/16px "Noto Sans", "Noto Sans CJK SC", sans-serif; color: #1c1c1c; background: #e1e1ec;
}
button, select, input { font: inherit; color: inherit; border: 0; background: none; padding: 0; margin: 0; }
button { display: flex; align-items: center; white-space: nowrap; flex: none; }
h1, h2, p { margin: 0; font: inherit; }
svg { display: block; flex: none; fill: none; stroke: currentColor; }
.defs { position: absolute; width: 0; height: 0; }
.i { width: 16px; height: 16px; stroke-width: 1; color: #3c3c3c; }
.c { width: 6px; height: 4px; color: #666; }
.off, .off svg { color: #aaa; }

/* title bar */
.titlebar { display: flex; align-items: center; height: 32px; padding: 0 16px 0 8px; flex: none; background: #e0e0eb; }
.logo { width: 24px; height: 24px; stroke: none; }
.app-name { margin-left: 4px; flex: none; color: #000; }
.quick { display: flex; gap: 15px; margin-left: 24px; }
.quick button { width: 16px; }
.quick .c { margin-left: 4px; }
.quick button:has(.c) { width: 24px; }
.account { display: flex; gap: 8px; margin-left: auto; }
.pill { height: 24px; border-radius: 12px; font-weight: 600; color: #000; gap: 6px; }
.promo { width: 97px; padding-left: 11px; gap: 2px; background: linear-gradient(#ff6b52, #ff2d5b); color: #fff; font-size: 14px; }
.promo svg { width: 26px; height: 24px; stroke: none; }
.vip { width: 90px; padding-left: 12px; background: linear-gradient(90deg, #ffee8c, #ffd27d); color: #45300e; }
.vip svg { color: #45300e; }
.login { width: 70px; padding-left: 12px; background: #f8f8fc; }
.winbtns { display: flex; gap: 16px; margin-left: 16px; }
.winbtns .i { color: #111; }

/* menu bar */
.menubar { display: flex; height: 24px; padding-left: 3px; background: #e1e1ed; justify-content: space-between; flex: none; }
.menus { display: flex; }
.menus button { position: relative; width: 72px; padding-top: 2px; justify-content: center; }
.menus .file { width: 76px; padding-right: 4px; }
.menus .on { background: #f2f2f7; border-radius: 8px 8px 0 0; font-weight: 700; color: #000; }
.hot { position: absolute; left: 46px; top: 2px; width: 24px; height: 13px; border-radius: 4px; background: linear-gradient(90deg, #c0539e, #4532ff 40%, #1488ff); color: #fff; font: 600 11px/12px "Noto Sans", sans-serif; text-align: center; }
.actions { display: flex; align-items: center; gap: 17px; padding: 1px 16px 0 0; color: #333; }
.actions button { gap: 4px; }
.actions .i { width: 15px; height: 15px; }
.help { position: relative; padding-left: 2px; }
.help::after { content: ""; position: absolute; left: 18px; top: -3px; width: 6px; height: 6px; border-radius: 3px; background: #ff4040; }

/* ribbon */
.ribbon { display: flex; height: 100px; background: #f2f2f7; border-bottom: 1px solid #e3e3ea; flex: none; }
.ribbon .i { stroke-width: 1.700px; }
.group { position: relative; display: flex; flex-direction: column; padding: 10px 0 0 16px; flex: none; }
.group::after { content: ""; position: absolute; right: 0; top: 10px; bottom: 8px; width: 1px; background: #dcdce2; }
.row { display: flex; align-items: center; height: 24px; gap: 8px; }
.row + .row { margin-top: 10px; }
.row .c { margin-left: 4px; }
.wide { gap: 16px; }
.marks .set { display: flex; gap: 10px; }
.marks { gap: 12px; }
.marks .plain { gap: 12px; }
.label { display: grid; grid-template-columns: 1fr auto 1fr; align-items: center; height: 16px; margin: 8px 12px 0 -4px; font-size: 11px; color: #777; }
.label span { grid-column: 2; }
.label button { grid-column: 3; justify-self: end; }
.launch { width: 9px; height: 9px; color: #444; }
.g-clip { width: 90px; }
.g-font { width: 371px; }
.g-tools { width: 190px; padding-left: 12px; }
.g-tools .label { margin-left: 0; }
.g-style { width: 454px; }
.g-arrange { width: 251px; padding-left: 12px; }
.g-arrange .label { margin-left: 0; }
.g-replace { width: 93px; padding-left: 0; align-items: center; }
.g-replace .label { margin: 8px 0 0; }
.combo { display: flex; align-items: center; height: 24px; border-radius: 6px; background: #fff; }
.combo select, .pg-pick select { appearance: none; flex: 1; min-width: 0; outline: 0; }
.combo .i { color: #bbb; }
.ribbon .combo.font { width: 166px; padding: 0 6px; gap: 9px; }
.ribbon .combo.size { width: 64px; padding: 0 6px 0 13px; }
.sq { width: 22px; justify-content: center; }
.tool { height: 24px; padding-left: 8px; border-radius: 4px; gap: 8px; }
.tool .c { margin-left: -4px; }
.g-tools .tool:first-child { width: 72px; }
.g-arrange .tool { width: 70px; }
.active { background: #e4e4e9; }
.style-row { display: flex; height: 58px; gap: 16px; }
.gallery { display: flex; align-items: center; gap: 8px; width: 352px; padding: 2px 0 0 12px; background: #fff; border-radius: 6px; }
.gallery > button { width: 32px; height: 32px; border-width: 1px; border-style: solid; border-radius: 4px; justify-content: center; }
.s1 { border-color: #3a6b62; } .s2 { border-color: #3f4f85; } .s3 { border-color: #444; } .s4 { border-color: #7a4247; }
.s5 { border-color: #80693f; } .s6 { border-color: #4d5f78; } .s7 { border-color: #474f80; } .s8 { border-color: #7d5a33; }
.chosen { outline: 1px solid #0080ff; outline-offset: 3px; }
.gallery .arrows { display: flex; flex-direction: column; justify-content: space-between; height: 44px; margin-left: 8px; }
.last { border-top: 1px solid #777; padding-top: 1px; }
.stack { display: flex; flex-direction: column; }
.stack button { height: 20px; gap: 4px; }
.stack .c { margin-left: -1px; }
.stack .small { padding: 1px; }
.white-bar { border-bottom: 3px solid #fff; }
.navy-bar { border-bottom: 3px solid #12124a; }
.big { flex-direction: column; height: 58px; padding-top: 4px; color: #111; }
.big span { margin-top: 10px; }
.big .c { margin-top: 1px; }

/* symbol panel */
.work { display: flex; flex: 1; min-height: 0; background: #fff; }
.panel { width: 221px; flex: none; display: flex; flex-direction: column; border-right: 1px solid #e3e3ea; }
.panel-head { display: flex; align-items: center; height: 36px; padding: 0 12px 0 13px; flex: none; }
.drawer { width: 15px; height: 15px; color: #444; }
.more-sym { font-size: 13px; font-weight: 500; color: #000; margin-left: 8px; gap: 4px; }
.collapse svg { width: 13px; height: 13px; color: #777; }
.panel .collapse { margin-left: auto; }
.search { display: flex; align-items: center; height: 32px; margin: 4px 10px 8px 8px; padding: 0 6px 0 10px; border-radius: 6px; background: #f2f2f7; flex: none; }
.search input { flex: 1; min-width: 0; outline: 0; }
.search input::placeholder { color: #888; opacity: 1; }
.search button { width: 40px; height: 20px; justify-content: center; border-radius: 4px; background: #0080ff; color: #fff; }
.lib { display: flex; align-items: center; height: 41px; margin: 0 14px 0 16px; border-top: 1px solid #ececf0; padding-top: 6px; flex: none; }
.up2 { width: 8px; height: 10px; margin: 2px 0 0 6px; stroke-width: 1.500px; }
.lib button { margin-left: auto; gap: 3px; }
.lib button svg { width: 11px; height: 11px; color: #444; }
.sym-scroll { position: relative; flex: 1; min-height: 0; overflow: hidden; }
.peek { width: 50px; height: 12px; margin: 0 0 6px 5px; color: #999; }
.sec { display: flex; align-items: center; height: 36px; margin-right: 8px; padding: 2px 4px 0 11px; border-radius: 6px; background: #eee; color: #000; }
.second { margin-top: 6px; }
.tri { width: 8px; height: 6px; stroke: none; fill: #666; margin-right: 6px; }
.sec button { margin-left: auto; }
.sec button svg { width: 14px; height: 14px; color: #444; }
.shapes { display: grid; grid-template-columns: repeat(4, 50px); grid-auto-rows: 50px; padding: 8px 0 0 5px; color: #999; }
.shapes svg { width: 50px; height: 50px; }
.shapes text { stroke: none; fill: #888; text-anchor: middle; }
.bpmn svg { stroke: none; }
.yes { font-size: 11px; }
.tiny { font-size: 5px; }
.thumb { position: absolute; right: 2px; top: 31px; width: 6px; height: 38px; border-radius: 3px; background: #e1e1e8; }

/* documents and canvas */
.center { flex: 1; min-width: 0; display: flex; flex-direction: column; }
.docs { display: flex; height: 25px; border-bottom: 1px solid #e6e6ec; flex: none; }
.doc { width: 160px; padding: 2px 14px 0 13px; gap: 6px; background: #f7f7fa; border-right: 1px solid #e6e6ec; }
.doc svg { width: 13px; height: 14px; color: #777; }
.doc.on { background: #fff; color: #0080ff; font-weight: 700; }
.doc.on svg { color: #2f8fff; }
.doc .dot, .doc .x { margin-left: auto; }
.doc .x { width: 10px; height: 10px; color: #555; stroke-width: 2px; }
.dot { width: 6px; height: 6px; border-radius: 3px; background: #ff4040; }
.add { padding-left: 5px; }
.add svg { width: 14px; height: 14px; stroke-width: 1.500px; }
.stage { flex: 1; min-height: 0; display: grid; grid-template: 17px minmax(0, 1fr) 15px / 17px minmax(0, 1fr) 16px; }
.ruler { width: 100%; height: 100%; overflow: hidden; stroke: #e0e0e8; }
.ruler.h { border-bottom: 1px solid #e6e6ec; }
.ruler text { stroke: none; fill: #777; font-size: 9px; }
.canvas { position: relative; background: #ebebf0; overflow: hidden; }
.drawing { width: 100%; height: 100%; stroke: none; }
.edge { stroke: #d0d0d0; }
.links path { stroke: #111; marker-end: url(#flow-head); }
.nodes > * { fill: #fff; stroke: #15154a; }
.sel { stroke: #0080ff; stroke-dasharray: 8 4; }
.names text { font-size: 13px; fill: #111; text-anchor: middle; }
.grips > * { fill: #fff; stroke: #0080ff; }
.vbar { border-right: 1px solid #e6e6ec; padding: 190px 3px 0 2px; }
.vbar span { display: block; width: 10px; height: 528px; border-radius: 5px; background: #d2d3d5; }
.hbar { grid-column: 1 / 4; border-bottom: 1px solid #e6e6ec; border-top: 1px solid #e6e6ec; padding: 2px 141px 0 110px; }
.hbar span { display: block; height: 10px; border-radius: 5px; background: #d2d3d5; }
.palette { display: flex; align-items: center; height: 17px; padding-left: 11px; flex: none; }
.pick { width: 24px; gap: 2px; }
.pick .i { width: 14px; height: 14px; stroke-width: 1.500px; }
.swatches { display: flex; gap: 2px; flex: 1; max-width: 1540px; height: 14px; }
.swatches i { flex: 1; border-radius: 2px; }

/* floating format bar */
.floatbar { position: absolute; left: 539px; top: 147px; display: flex; width: 406px; height: 67px; padding: 7px 8px 6px 7px; border-radius: 6px; background: #fff; box-shadow: 0 1px 8px #0003; }
.fb-text { width: 152px; }
.fb-row { display: flex; align-items: center; height: 24px; gap: 6px; margin-top: 1px; }
.fb-row.marks { gap: 14px; padding-left: 4px; margin-top: 4px; }
.floatbar .i { stroke-width: 1.500px; }
.floatbar .combo { border: 1px solid #eee; }
.floatbar .combo.font { width: 90px; padding: 0 4px; gap: 2px; }
.floatbar .combo.size { width: 48px; padding: 0 4px 0 7px; }
.fb-set { display: flex; border-left: 1px solid #ebebeb; padding: 0 5px; }
.fb-set:nth-child(2) { padding: 0 5px 0 4px; }
.fb-set button { flex-direction: column; width: 40px; font-size: 11px; gap: 12px; padding-top: 9px; }
.fb-end { display: flex; flex-direction: column; justify-content: space-between; margin-left: auto; color: #999; }
.fb-end svg { width: 10px; height: 10px; }

.rail { width: 34px; flex: none; display: flex; flex-direction: column; }
.rail .collapse { height: 31px; justify-content: center; }
.fill { height: 35px; justify-content: center; background: #0080ff; }
.fill .i { width: 18px; height: 18px; color: #fff; stroke-width: 1.500px; }

/* status bar */
.status { display: flex; align-items: stretch; height: 30px; background: linear-gradient(#e2e2ef 70%, #d9dfee); flex: none; }
.status > button, .pg-pick { border-right: 1px solid #eeeef6; justify-content: center; padding-top: 2px; }
.pg-view { width: 49px; }
.status .pg-view { padding-left: 8px; }
.pg-view svg { width: 22px; height: 14px; stroke-width: 2px; color: #444; }
.pg-pick { display: flex; align-items: center; width: 120px; padding: 2px 10px 0 8px; }
.pg-add { width: 48px; }
.pg-add svg { width: 10px; height: 10px; stroke-width: 3px; }
.pg-tab { width: 80px; color: #0080ff; font-weight: 500; }
.info { display: flex; align-items: center; gap: 16px; margin-left: auto; padding: 2px 20px 0 0; }
.count { width: 106px; }
.count div { display: flex; justify-content: space-between; white-space: nowrap; }
.count a { color: #ff7b1c; text-decoration: none; }
progress { display: block; appearance: none; width: 106px; height: 4px; border: 0; margin-top: 2px; }
progress::-webkit-progress-bar { background: #d3d3dd; border-radius: 2px; }
progress::-webkit-progress-value { background: #0080ff; border-radius: 2px; }
.gem { width: 14px; height: 12px; stroke: none; margin-left: -8px; }
.sid { border-left: 1px solid #eeeef6; border-right: 1px solid #eeeef6; padding: 0 8px; margin: 0 -4px 0 -8px; white-space: nowrap; }
.foc { gap: 8px; }
.zoom { gap: 6px; }
.status .i { stroke-width: 1.500px; }
.zoomer { display: flex; align-items: center; gap: 6px; margin-left: -4px; }
.zoomer .pl { width: 12px; height: 12px; stroke-width: 2px; margin-left: 4px; }
.zoomer input { appearance: none; width: 92px; height: 2px; background: #3c3c3c; }
.zoomer input::-webkit-slider-thumb { appearance: none; width: 12px; height: 12px; border: 2px solid #333; border-radius: 6px; background: #fff; }

/* things that float over the window */
.ime { position: absolute; left: 1077px; bottom: 2px; display: flex; align-items: center; justify-content: center; gap: 4px; width: 60px; height: 25px; border-radius: 5px; background: #fff; box-shadow: 0 0 3px 1px #555; color: #333; }
.ime svg { width: 12px; height: 14px; }
.arrows-layer { position: absolute; inset: 0; width: 100%; height: 100%; pointer-events: none; filter: drop-shadow(3px 4px 2px #0008); }
.arrows-layer path { stroke: #f00; stroke-width: 3px; stroke-linecap: round; marker-end: url(#red-head); }

.mark { position: absolute; right: 10px; bottom: 5px; display: flex; width: 465px; height: 114px; background: #fff9; }
.mark-text { width: 276px; padding-left: 11px; }
.mark-cn { font: 700 49px/60px "Noto Sans CJK SC", sans-serif; color: #ff2b2b; }
.mark-url { font: 38px/56px "Liberation Serif", serif; color: #1f6fee; -webkit-text-stroke: 1px #1f6fee; }
.mark-tag { width: 189px; border-radius: 26px; background: #1473ffe6; color: #fff; font: 700 86px/106px "Noto Sans CJK SC", sans-serif; text-align: center; }
.mark-dim { position: absolute; right: 2px; bottom: 0; text-align: right; color: #0b55c040; font: 700 21px/24px "Noto Sans CJK SC", sans-serif; }
.dim-url { font-size: 15px; line-height: 20px; }
```
FILE: script.js
```js
// Rulers: one labelled tick every 10 mm, a short tick every 5 mm.
const STEP = 37.8;
const NS = "http://www.w3.org/2000/svg";

function add(parent, name, attrs, text) {
  const el = document.createElementNS(NS, name);
  for (const key in attrs) el.setAttribute(key, attrs[key]);
  if (text !== undefined) el.textContent = text;
  parent.appendChild(el);
}

const rulerH = document.getElementById("ruler-h");
for (let mm = -70; mm <= 360; mm += 10) {
  const x = Math.round(254 + (mm / 10) * STEP) + 0.5;
  const mid = Math.round(x + STEP / 2 - 0.5) + 0.5;
  add(rulerH, "path", { d: `M${x} 0V17M${mid} 9V17` });
  add(rulerH, "text", { x: x + 2, y: 10 }, mm);
}

const rulerV = document.getElementById("ruler-v");
for (let mm = 40; mm <= 230; mm += 10) {
  const y = Math.round(24.3 + ((mm - 40) / 10) * STEP) + 0.5;
  const mid = Math.round(y + STEP / 2 - 0.5) + 0.5;
  add(rulerV, "path", { d: `M0 ${y}H17M10 ${mid}H17` });
  add(rulerV, "text", { transform: `translate(10 ${y + 2}) rotate(-90)`, "text-anchor": "end" }, mm);
}

const COLORS = `b01020 cc0c33 ea4462 f76585 fa9cb0 2a8090 3aaac4 40c0e0 60d8f0 a8f0ff
f55228 ff8038 ff981c ffb814 ffc55c 109880 18b89c 18ccb0 68d8c4 84ecd8
9b2d60 c94f8f e368a8 fa84c8 f2c0dc 608c14 78a028 9cc024 b4d248 d2e08c
2028b0 3440dc 7040f4 906cfc b094fa fcc800 fcdc2c f2ea28 fcf64c feff84
9c50dc c44ee4 d66cfa c082fc d8a2fe 308048 3ca058 50ac74 64bc88 90d6a8
e8362c ff4a3c fc6464 ff7a7a ff9288 2641a5 2f58d4 3a6cf0 6490ff 8ab2f5
7a2f00 993700 a84226 d05f40 e27657 1a8cdb 2b9cf5 41aaff 4ed9ff 69e4ff
78412d 915a3f bc6c4b d77d5d f08f69 878078 aaa591 c8c8b4 e1dacb faeed7
121212 323232 555555 808080 aaaaaa cccccc`.split(/\s+/);

const box = document.getElementById("swatches");
for (const color of COLORS) {
  const item = document.createElement("i");
  item.style.background = "#" + color;
  box.appendChild(item);
}
```
